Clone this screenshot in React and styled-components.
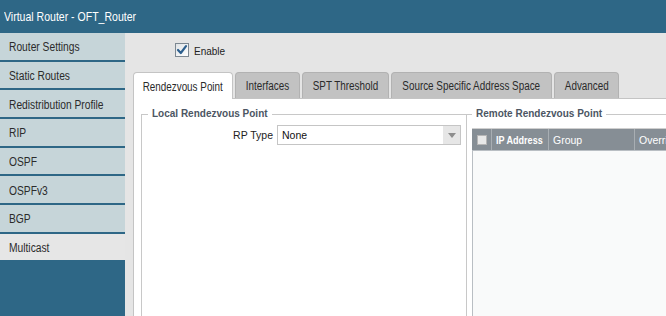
import React from "react";
import styled, { createGlobalStyle } from "styled-components";

const sans = `"Liberation Sans", Arial, sans-serif`;

const GlobalStyle = createGlobalStyle`
    html, body {
        margin: 0;
        padding: 0;
        height: 316px;
        overflow: hidden;
        background: #e5e5e5;
    }
`

// the UI uses a narrow face; squeeze the regular one to its widths
const Narrow = styled.span`
    display: inline-block;
    white-space: nowrap;
    transform: scaleX(${props => props.$scale || 0.82});
    transform-origin: ${props => props.$origin || "left"} center;
`

const Window = styled.div`
    width: 666px;
    height: 316px;
    overflow: hidden;
    display: flex;
    flex-direction: column;
    background: #e5e5e5;
`

const TitleBar = styled.div`
    height: 33px;
    flex-shrink: 0;
    box-sizing: border-box;
    padding: 9px 0 0 4px;
    background: #2e6786;
    color: #ffffff;
    font-family: ${sans};
    font-size: 13px;
    line-height: 15px;
`

const Title = styled.span`
    display: inline-block;
    white-space: nowrap;
    transform: scaleX(0.81);
    transform-origin: 0 50%;
`

const Body = styled.div`
    flex: 1;
    display: flex;
    min-height: 0;
`

const Sidebar = styled.div`
    width: 125px;
    flex-shrink: 0;
    background: #2e6786;
    display: flex;
    flex-direction: column;
`

const NavItem = styled.div`
    height: 28.67px;
    box-sizing: border-box;
    border-bottom: 2px solid #2e6786;
    background: ${props => props.$active ? "#e6e6e6" : "#c6d5d9"};
    color: #2b2b2b;
    font-family: ${sans};
    font-size: 12.5px;
    display: flex;
    align-items: center;
    padding: 2px 0 0 9px;
    position: relative;

    &::after {
        content: "";
        position: absolute;
        left: 0;
        bottom: -3px;
        width: 2px;
        height: 2px;
        background: #2e6786;
    }
`

const Main = styled.div`
    flex: 1;
    display: flex;
    flex-direction: column;
    padding-left: 8px;
    min-width: 0;
`

const EnableRow = styled.div`
    height: 39px;
    flex-shrink: 0;
    box-sizing: border-box;
    padding: 10px 0 0 42px;
    display: flex;
    align-items: center;
    align-self: flex-start;
    gap: 5px;
    font-family: ${sans};
    font-size: 10px;
    color: #222;
    line-height: 14px;

    & > svg {
        margin-bottom: 15px;
    }
    & > span {
        margin-bottom: 12px;
    }
`

const TabBar = styled.div`
    height: 26px;
    flex-shrink: 0;
    display: flex;
    gap: 2px;
    align-items: flex-start;
`

const Tab = styled.div`
    width: ${props => props.$w}px;
    height: ${props => props.$active ? 27 : 26}px;
    box-sizing: border-box;
    border: 1px solid ${props => props.$active ? "#c4c4c4" : "#b2b2b2"};
    border-bottom: none;
    border-radius: 4px 4px 0 0;
    background: ${props => props.$active ? "#ffffff" : "#c2c2c2"};
    color: #2a2a2a;
    font-family: ${sans};
    font-size: 12.5px;
    display: flex;
    align-items: center;
    justify-content: center;
    padding-top: 1px;
    position: relative;
    z-index: 1;
`

const Panel = styled.div`
    flex: 1;
    background: #ffffff;
    border-top: 1px solid #c4c4c4;
    border-left: 1px solid #c4c4c4;
    padding: 8px 0 0 7px;
    display: flex;
    align-items: flex-start;
    overflow: hidden;
`

const Group = styled.fieldset`
    margin: 0;
    height: 240px;
    box-sizing: border-box;
    border: 1px solid #c8c8c8;
    border-left: ${props => props.$open ? "none" : "1px solid #c8c8c8"};
    border-right: ${props => props.$open ? "none" : "1px solid #c8c8c8"};
    border-bottom: none;
    padding: 0 0 0 ${props => props.$open ? 5 : 6}px;
    width: ${props => props.$w ? props.$w + "px" : "auto"};
    flex: ${props => props.$w ? "none" : 1};
    min-width: 0;
`

const Legend = styled.legend`
    padding: 0 4px;
    font-family: ${sans};
    font-weight: bold;
    font-size: 10px;
    line-height: 14px;
    color: #4c5663;
`

const FieldRow = styled.div`
    display: flex;
    align-items: center;
    gap: 4px;
    margin-top: 4px;
`

const Label = styled.div`
    width: 125px;
    text-align: right;
    font-family: ${sans};
    font-size: 10.5px;
    color: #222;
`

const Select = styled.div`
    width: 184px;
    height: 20px;
    box-sizing: border-box;
    border: 1px solid #c5c5c5;
    display: flex;
    align-items: stretch;
`

const SelectValue = styled.div`
    flex: 1;
    padding-left: 4px;
    display: flex;
    align-items: center;
    font-family: ${sans};
    font-size: 10.5px;
    color: #111;
`

const Arrow = styled.div`
    width: 17px;
    background: #e6e6e6;
    display: flex;
    align-items: center;
    justify-content: center;

    &::after {
        content: "";
        border-left: 4px solid transparent;
        border-right: 4px solid transparent;
        border-top: 5px solid #8d8d8d;
    }
`

const Table = styled.div`
    margin-top: 7px;
    width: 260px;
    border-top: 1px solid #cfcfcf;
`

const HeadRow = styled.div`
    height: 21px;
    display: flex;
    background: #868e95;
`

const HeadCell = styled.div`
    width: ${props => props.$w}px;
    flex-shrink: 0;
    box-sizing: border-box;
    border-right: 1px solid #a8aeb3;
    display: flex;
    align-items: center;
    justify-content: ${props => props.$center ? "center" : "flex-start"};
    padding-left: ${props => props.$center ? 0 : 4}px;
    color: #ffffff;
    font-family: ${sans};
    font-weight: ${props => props.$sorted ? "bold" : "normal"};
    font-size: 10.5px;
    white-space: nowrap;
    overflow: hidden;
`

const HeadCheck = styled.div`
    width: 10px;
    height: 10px;
    box-sizing: border-box;
    border: 1px solid #b5b5b5;
    background: #e8e8e8;
`

const TableBody = styled.div`
    height: 200px;
    background: #f9fafa;
    border-top: 1px solid #b9bec3;
    border-left: 1px solid #b9bec3;
`

const CheckBox = () => (
    <svg width="14" height="14" viewBox="0 0 14 14">
        <defs>
            <linearGradient id="cbg" x1="0" y1="0" x2="1" y2="1">
                <stop offset="0" stopColor="#dfe3e6" />
                <stop offset="1" stopColor="#ffffff" />
            </linearGradient>
        </defs>
        <rect x="0.5" y="0.5" width="13" height="13" fill="url(#cbg)" stroke="#7d8892" />
        <path d="M3 7 L5.8 10 L11 3.2" fill="none" stroke="#2d5f8e" strokeWidth="2.2" strokeLinecap="round" strokeLinejoin="round" />
    </svg>
)

const navItems = ["Router Settings", "Static Routes", "Redistribution Profile", "RIP", "OSPF", "OSPFv3", "BGP", "Multicast"];

const tabs = [
    { name: "Rendezvous Point", w: 100 },
    { name: "Interfaces", w: 65 },
    { name: "SPT Threshold", w: 87 },
    { name: "Source Specific Address Space", w: 161 },
    { name: "Advanced", w: 65 },
];

function App() {
    return (
        <Window>
            <GlobalStyle />
            <TitleBar><Title>Virtual Router - OFT_Router</Title></TitleBar>
            <Body>
                <Sidebar>
                    {navItems.map(item => (
                        <NavItem key={item} $active={item === "Multicast"}>
                            <Narrow>{item}</Narrow>
                        </NavItem>
                    ))}
                </Sidebar>
                <Main>
                    <EnableRow>
                        <CheckBox />
                        <span>Enable</span>
                    </EnableRow>
                    <TabBar>
                        {tabs.map((tab, i) => (
                            <Tab key={tab.name} $w={tab.w} $active={i === 0}>
                                <Narrow $origin="center" $scale={0.79}>{tab.name}</Narrow>
                            </Tab>
                        ))}
                    </TabBar>
                    <Panel>
                        <Group $w={326}>
                            <Legend>Local Rendezvous Point</Legend>
                            <FieldRow>
                                <Label>RP Type</Label>
                                <Select>
                                    <SelectValue>None</SelectValue>
                                    <Arrow />
                                </Select>
                            </FieldRow>
                        </Group>
                        <Group $open>
                            <Legend>Remote Rendezvous Point</Legend>
                            <Table>
                                <HeadRow>
                                    <HeadCell $w={20} $center><HeadCheck /></HeadCell>
                                    <HeadCell $w={57} $sorted><Narrow $scale={0.86}>IP Address</Narrow></HeadCell>
                                    <HeadCell $w={86}>Group</HeadCell>
                                    <HeadCell $w={97}>Override</HeadCell>
                                </HeadRow>
                                <TableBody />
                            </Table>
                        </Group>
                    </Panel>
                </Main>
            </Body>
        </Window>
    )
}

export default App;
